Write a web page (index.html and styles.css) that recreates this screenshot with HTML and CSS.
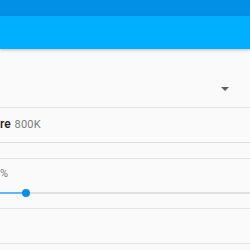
FILE: index.html
```html
<!DOCTYPE html>
<html lang="en">
<head>
    <meta charset="UTF-8">
    <title>Settings</title>
    <link rel="stylesheet" href="styles.css">
</head>
<body>
<div class="status-bar"></div>
<div class="toolbar"></div>
<div class="content">
    <div class="row spinner-row">
        <svg class="arrow" width="8" height="4" viewBox="0 0 8 4"><path d="M0 0h8L4 4z" fill="#616161"/></svg>
    </div>
    <div class="row info-row">
        <span class="label">re</span>
        <span class="value">800K</span>
    </div>
    <div class="row gap-row"></div>
    <div class="row slider-row">
        <span class="value">%</span>
        <div class="slider">
            <div class="track-active" style="width: 26px"></div>
            <div class="thumb"></div>
        </div>
    </div>
    <div class="row empty-row"></div>
</div>
</body>
</html>
```

FILE: styles.css
```css
*{
    padding: 0;
    margin: 0;
    box-sizing: border-box;
}
body{
    width: 250px;
    height: 250px;
    overflow: hidden;
    background: #fafafa;
    font-family: Roboto, "Noto Sans", sans-serif;
}
.status-bar{
    height: 16px;
    background: #0290e6;
}
.toolbar{
    height: 33px;
    background: #00b0ff;
    box-shadow: 0 1px 3px rgba(0,0,0,0.25);
    position: relative;
    z-index: 1;
}
.content{
    display: flex;
    flex-direction: column;
}
.row{
    border-bottom: 1px solid #e3e3e3;
}
.spinner-row{
    height: 59px;
    display: flex;
    justify-content: flex-end;
    align-items: flex-end;
    padding: 0 21px 16px 0;
}
.info-row{
    height: 35px;
    display: flex;
    align-items: center;
    gap: 4px;
    padding-bottom: 2px;
    border-bottom-color: #dcdcdc;
}
.label{
    font-size: 12px;
    font-weight: 500;
    color: #212121;
}
.value{
    font-size: 11px;
    color: #7a7a7a;
    letter-spacing: 0.2px;
}
.gap-row{
    height: 16px;
}
.slider-row{
    height: 50px;
    padding-top: 8px;
    display: flex;
    flex-direction: column;
}
.slider{
    margin-top: 12px;
    height: 2px;
    background: #e0e0e0;
    position: relative;
}
.track-active{
    height: 2px;
    background: #64b5f6;
}
.thumb{
    position: absolute;
    left: 22px;
    top: -3px;
    width: 8px;
    height: 8px;
    border-radius: 50%;
    background: #0a8fe8;
}
.empty-row{
    height: 35px;
}
```
